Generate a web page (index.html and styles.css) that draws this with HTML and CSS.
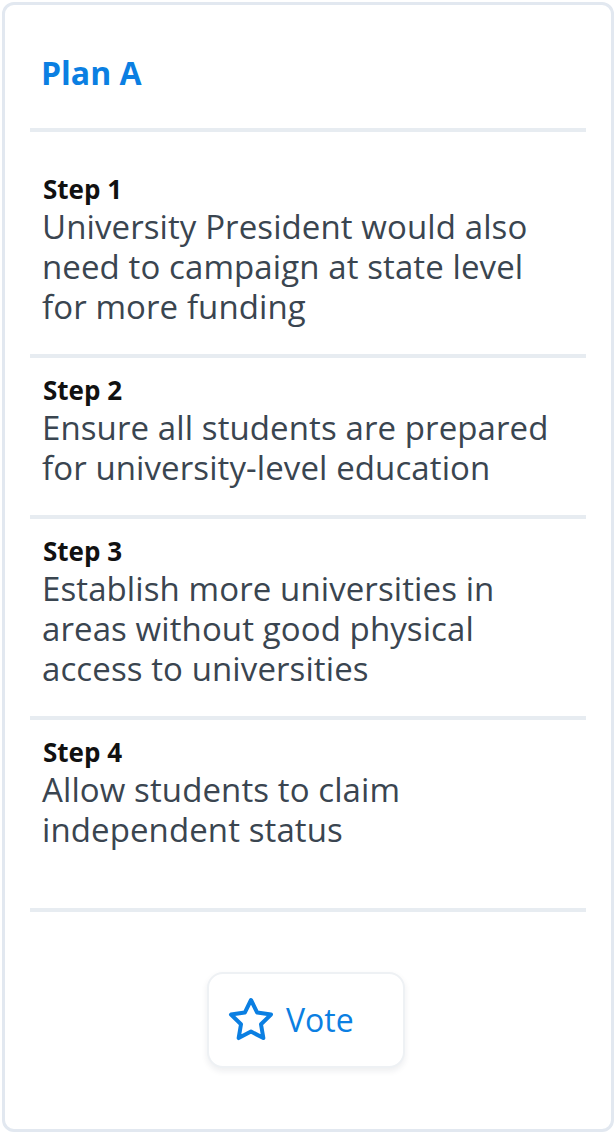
FILE: index.html
```html
<!DOCTYPE html>
<html lang="en">
<head>
<meta charset="utf-8">
<title>Plan A</title>
<link rel="stylesheet" href="styles.css">
</head>
<body>
<div class="card">
  <div class="header">
    <h1 class="title">Plan A</h1>
  </div>
  <ol class="steps">
    <li class="step">
      <div class="step-label">Step 1</div>
      <div class="step-text">University President would also need to campaign at state level for more funding</div>
    </li>
    <li class="step">
      <div class="step-label">Step 2</div>
      <div class="step-text">Ensure all students are prepared for university-level education</div>
    </li>
    <li class="step">
      <div class="step-label">Step 3</div>
      <div class="step-text">Establish more universities in areas without good physical access to universities</div>
    </li>
    <li class="step">
      <div class="step-label">Step 4</div>
      <div class="step-text">Allow students to claim independent status</div>
    </li>
  </ol>
  <div class="footer">
    <button class="vote" type="button">
      <svg class="star" width="48" height="48" viewBox="0 0 24 24" fill="none" stroke="currentColor" stroke-width="2" stroke-linecap="round" stroke-linejoin="round"><polygon points="12 2 15.09 8.26 22 9.27 17 14.14 18.18 21.02 12 17.77 5.82 21.02 7 14.14 2 9.27 8.91 8.26 12 2"/></svg>
      <span class="vote-label">Vote</span>
    </button>
  </div>
</div>
</body>
</html>
```

FILE: styles.css
```css
* { box-sizing: border-box; }

html, body {
  margin: 0;
  padding: 0;
  background: #ffffff;
}

body {
  font-family: "Open Sans", "Noto Sans", sans-serif;
}

.card {
  margin: 2px;
  height: 1130px;
  border: 3px solid #e2e8f0;
  border-radius: 12px;
  padding: 0 25px;
  display: flex;
  flex-direction: column;
  background: #ffffff;
}

.header {
  padding: 48px 11px 35px;
}

.title {
  margin: 0;
  font-size: 32px;
  line-height: 40px;
  font-weight: 700;
  color: #0b7fe2;
}

.steps {
  list-style: none;
  margin: 0;
  padding: 25px 0 0;
  border-top: 4px solid #e7ecf1;
  flex: 1;
  display: flex;
  flex-direction: column;
}

.step {
  padding: 14px 12px 27px;
  border-bottom: 4px solid #e7ecf1;
}

.step:last-child {
  flex: 1;
}

.step-label {
  font-size: 26px;
  line-height: 36px;
  font-weight: 700;
  color: #111111;
  padding-left: 1px;
}

.step-text {
  font-size: 33px;
  line-height: 40px;
  letter-spacing: 0.1px;
  font-weight: 400;
  color: #3a4550;
}

.footer {
  display: flex;
  justify-content: center;
  padding: 60px 0 61px;
}

.vote {
  width: 198px;
  height: 96px;
  margin-right: 4px;
  display: flex;
  align-items: center;
  gap: 11px;
  padding: 0 0 0 18px;
  border: 2px solid #eef1f4;
  border-radius: 16px;
  background: #ffffff;
  box-shadow: 0 3px 6px rgba(30, 40, 60, 0.08);
  color: #0b7fe2;
  font-family: "Open Sans", "Noto Sans", sans-serif;
  cursor: pointer;
}

.star {
  display: block;
  flex: none;
}

.vote-label {
  font-size: 32px;
  line-height: 40px;
  font-weight: 400;
}
```
